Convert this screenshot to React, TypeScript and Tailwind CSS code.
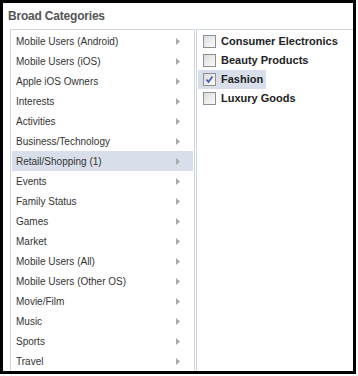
import React from 'react';

const categories = [
  'Mobile Users (Android)',
  'Mobile Users (iOS)',
  'Apple iOS Owners',
  'Interests',
  'Activities',
  'Business/Technology',
  'Retail/Shopping (1)',
  'Events',
  'Family Status',
  'Games',
  'Market',
  'Mobile Users (All)',
  'Mobile Users (Other OS)',
  'Movie/Film',
  'Music',
  'Sports',
  'Travel',
];

const options = [
  { label: 'Consumer Electronics', checked: false },
  { label: 'Beauty Products', checked: false },
  { label: 'Fashion', checked: true },
  { label: 'Luxury Goods', checked: false },
];

function Checkbox({ checked }: { checked: boolean }) {
  return (
    <span className="relative w-[13px] h-[13px] shrink-0 border border-[#8f8f8f] bg-gradient-to-br from-[#dcdcdc] to-[#fbfbfb]">
      {checked && (
        <svg viewBox="0 0 11 11" className="absolute inset-0 w-[11px] h-[11px]">
          <path d="M2.5 5.5 L4.5 8 L8.5 2.5" fill="none" stroke="#3a55b8" strokeWidth="1.6" />
        </svg>
      )}
    </span>
  );
}

export default function App() {
  return (
    <div className="w-[358px] h-[376px] bg-white" style={{ fontFamily: '"Liberation Sans", Arial, sans-serif' }}>
      <div className="w-[356px] h-[374px] border-[3px] border-black overflow-hidden">
        <div className="pl-[5px] pt-[5px] pb-[5px] h-[26px] text-[12px] leading-[16px] font-bold tracking-[-0.2px] text-[#555]">
          Broad Categories
        </div>
        <div className="flex gap-px pl-[7px]">
          <div className="w-[185px] h-[400px] border border-[#cdd4e3] p-px shrink-0">
            {categories.map((c) => (
              <div
                key={c}
                className={`flex items-center justify-between h-[20px] pl-[4px] pr-[13px] text-[10px] text-[#333] ${
                  c.startsWith('Retail') ? 'bg-[#d8dfea]' : ''
                }`}
              >
                <span>{c}</span>
                <svg viewBox="0 0 4 7" className="w-[4px] h-[7px]">
                  <path d="M0 0 L4 3.5 L0 7 Z" fill="#aaa" />
                </svg>
              </div>
            ))}
          </div>
          <div className="w-[200px] h-[400px] border border-[#cdd4e3] pt-[2px] pl-px shrink-0">
            {options.map((o) => (
              <div key={o.label} className="flex">
                <div
                  className={`flex items-center gap-[5px] h-[19px] pl-[5px] pr-[3px] text-[11px] font-bold text-[#222] ${
                    o.checked ? 'bg-[#d8dfea]' : ''
                  }`}
                >
                  <Checkbox checked={o.checked} />
                  <span>{o.label}</span>
                </div>
              </div>
            ))}
          </div>
        </div>
      </div>
    </div>
  );
}
